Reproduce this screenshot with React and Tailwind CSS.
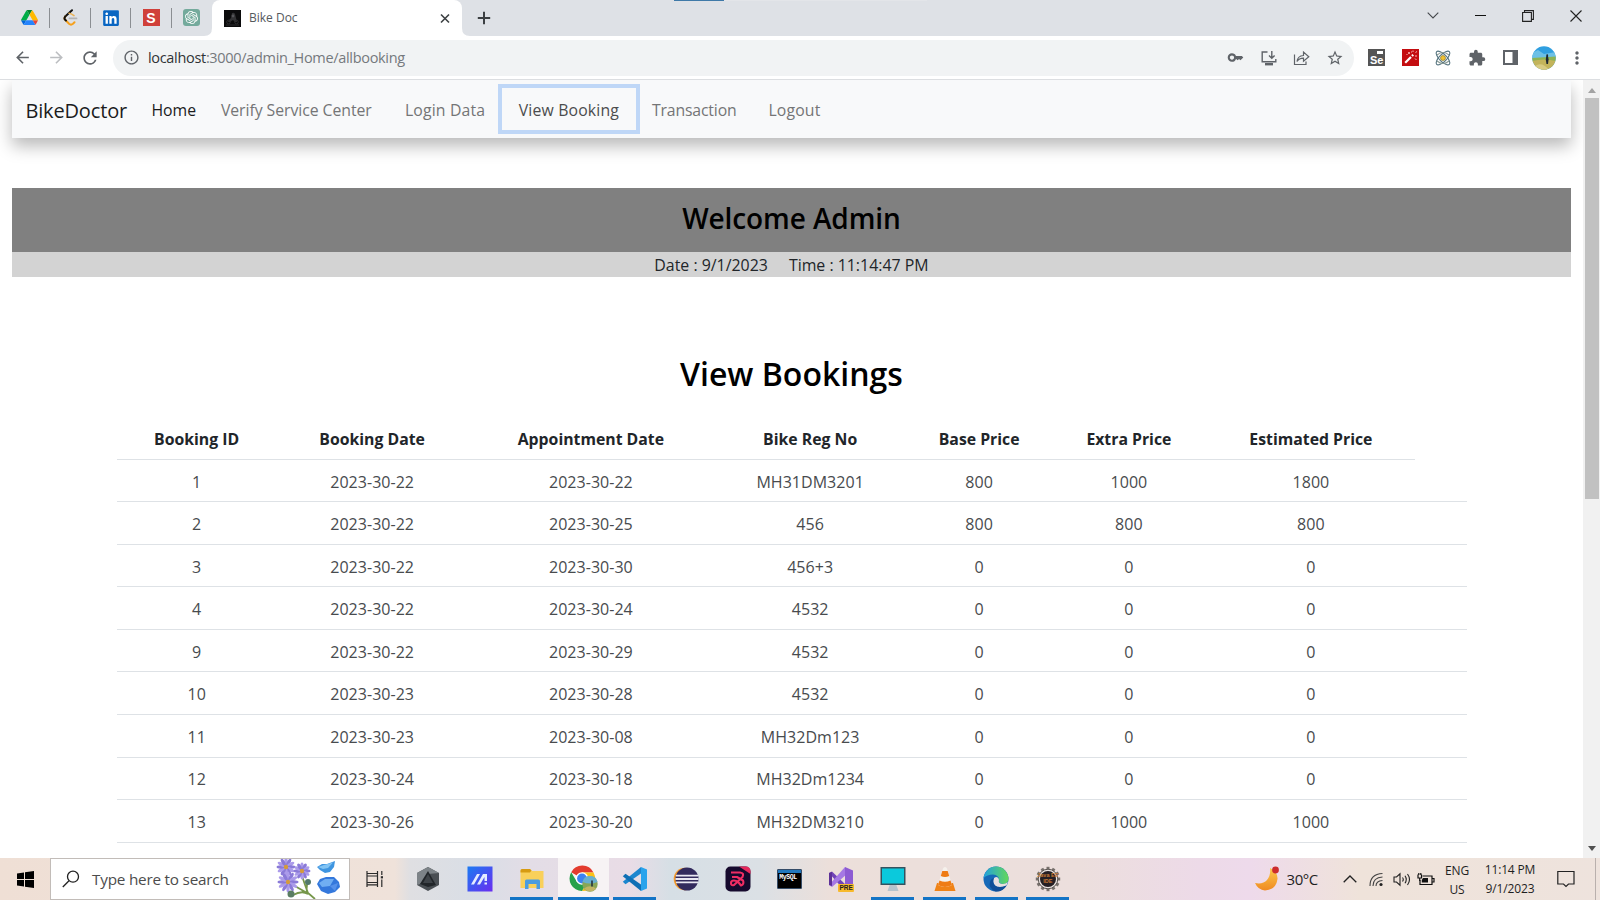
import React from "react";
import { MdKey, MdStarBorder, MdExtension, MdArrowBack, MdArrowForward, MdRefresh, MdInfoOutline, MdMoreVert } from "react-icons/md";
import { FaLinkedin } from "react-icons/fa";
import { SiOpenai } from "react-icons/si";

const Slot = ({ w, children, c = "" }) => (
  <div className={"flex shrink-0 items-center justify-center " + c} style={{ width: w }}>{children}</div>
);

function Drive() {
  return (
    <svg width="17" height="15" viewBox="0 0 87.3 78">
      <path d="m6.6 66.85 3.85 6.65c.8 1.4 1.95 2.5 3.3 3.3l13.75-23.8H0c0 1.55.4 3.1 1.2 4.5z" fill="#0066da" />
      <path d="m43.65 25-13.75-23.8c-1.35.8-2.5 1.9-3.3 3.3L1.2 48.5C.4 49.9 0 51.45 0 53h27.5z" fill="#00ac47" />
      <path d="m73.55 76.8c1.35-.8 2.5-1.9 3.3-3.3l9.25-16c.8-1.4 1.2-2.95 1.2-4.5H59.8l5.85 11.5z" fill="#ea4335" />
      <path d="m43.65 25 13.75-23.8C56.05.4 54.5 0 52.9 0H34.4c-1.6 0-3.15.45-4.5 1.2z" fill="#00832d" />
      <path d="M59.8 53H27.5L13.75 76.8c1.35.8 2.9 1.2 4.5 1.2h50.8c1.6 0 3.15-.45 4.5-1.2z" fill="#2684fc" />
      <path d="m73.4 26.5-12.7-22c-.8-1.4-1.95-2.5-3.3-3.3L43.65 25 59.8 53h27.45c0-1.55-.4-3.1-1.2-4.5z" fill="#ffba00" />
    </svg>
  );
}

function Leet() {
  return (
    <svg width="15" height="17" viewBox="0 0 15 17" fill="none" strokeLinecap="round">
      <path d="M9 1.2 2.2 7.6" stroke="#111" strokeWidth="2" />
      <path d="M2.2 7.6Q.8 9.2 2.2 10.8L6 14.8Q8 16.4 10 14.8L11.5 13.3" stroke="#f6a01b" strokeWidth="2" />
      <path d="M2.2 7.6Q.8 9.2 2.2 10.8L3 11.6" stroke="#111" strokeWidth="2" />
      <path d="M6 4.2Q8 4.2 11 6.6" stroke="#e9b155" strokeWidth="1.6" />
      <path d="M6.5 9.4H13.5" stroke="#b3b3b3" strokeWidth="1.8" />
    </svg>
  );
}

function BikeFav() {
  return (
    <svg width="17" height="17" viewBox="0 0 17 17">
      <rect width="17" height="17" fill="#0b0b0c" />
      <path d="M8 3Q10 2 11 4L12 8 13 12H11L9 10 6 12H4L5 10 7 8Z" fill="#323234" />
      <circle cx="9" cy="6" r="1.4" fill="#555558" />
      <circle cx="4.500" cy="12" r="1.800" fill="none" stroke="#2c2c2e" /><circle cx="12.500" cy="12" r="1.800" fill="none" stroke="#2c2c2e" />
      <path d="M2 15H15" stroke="#2c2c2e" />
    </svg>
  );
}

function TabStrip() {
  return (
    <div className="flex h-9 shrink-0 items-start bg-[#dee1e6]">
      <div className="flex h-[35px] w-[212px] items-center rounded-br-[8px] pl-[9px]">
        <Slot w={40}><Drive /></Slot>
        <div className="h-5 w-px bg-[#8b8e92]" />
        <Slot w={40}><Leet /></Slot>
        <div className="h-5 w-px bg-[#8b8e92]" />
        <Slot w={39}>
          <div className="flex h-[15px] w-[15px] items-center justify-center bg-white"><FaLinkedin size={18} color="#0a66c2" className="shrink-0" /></div>
        </Slot>
        <div className="h-5 w-px bg-[#8b8e92]" />
        <Slot w={40}>
          <div className="flex h-[17px] w-[17px] items-center justify-center bg-[#d0403a] font-['Liberation_Sans',sans-serif] text-[14px] leading-none font-bold text-white">S</div>
        </Slot>
        <div className="h-5 w-px bg-[#8b8e92]" />
        <Slot w={39}>
          <div className="flex h-[17px] w-[17px] items-center justify-center rounded-[3px] bg-[#74aa9c]"><SiOpenai size={13} color="#fff" /></div>
        </Slot>
      </div>
      <div className="relative flex h-9 w-[250px] items-center rounded-t-[8px] bg-white pl-3">
        <svg width="8" height="8" className="absolute bottom-0 -left-2"><path d="M8 0Q8 8 0 8H8Z" fill="#fff" /></svg>
        <svg width="8" height="8" className="absolute -right-2 bottom-0"><path d="M0 0Q0 8 8 8H0Z" fill="#fff" /></svg>
        <BikeFav />
        <span className="ml-2 w-[184px] text-[12px] leading-[34px] text-[#55595d]">Bike Doc</span>
        <svg width="17" height="17" viewBox="0 0 17 17" className="ml-[3.500px]" stroke="#3c4043" strokeWidth="1.6"><path d="M4 4.5 12 12.500M12 4.500 4 12.500" /></svg>
      </div>
      <div className="flex h-[35px] w-[44px] items-center justify-center">
        <svg width="14" height="14" viewBox="0 0 14 14" stroke="#3c4043" strokeWidth="2"><path d="M7 .8V13.200M.8 7H13.200" /></svg>
      </div>
      <div className="ml-[168px] h-px w-[50px] bg-[#3f79a8]" />
      <div className="h-px w-[203px] bg-[#e3e5e9]" />
      <div className="ml-auto flex h-[31px] items-center" >
        <Slot w={47}><svg width="12" height="7" viewBox="0 0 12 7" fill="none" stroke="#45484c" strokeWidth="1.1"><path d="M.7.7 6 6 11.300.7" /></svg></Slot>
        <Slot w={48}><div className="h-px w-[11px] bg-[#111]" /></Slot>
        <Slot w={47}><svg width="12" height="12" viewBox="0 0 12 12" fill="none" stroke="#222" strokeWidth="1.1"><path d="M.6 2.500H9.400V11.400H.6ZM2.500 2.500V.6H11.400V9.400H9.400" /></svg></Slot>
        <Slot w={49}><svg width="12" height="12" viewBox="0 0 12 12" stroke="#222" strokeWidth="1.1"><path d="M.5.5 11.500 11.500M11.500.5.5 11.500" /></svg></Slot>
      </div>
    </div>
  );
}

function Toolbar() {
  return (
    <div className="flex h-[44px] shrink-0 items-center border-b border-[#dcdee1] bg-white pl-[6px] text-[#5f6368]">
      <Slot w={33}><MdArrowBack size={19} /></Slot>
      <Slot w={34}><MdArrowForward size={19} color="#bcbec1" /></Slot>
      <Slot w={34}><MdRefresh size={20} /></Slot>
      <div className="ml-[6px] flex h-9 w-[1241px] items-center rounded-full bg-[#f1f3f4] pl-[10px]">
        <MdInfoOutline size={17} />
        <span className="ml-[8px] pt-px text-[14.500px] tracking-[-0.32px] text-[#75797d]"><span className="text-[#303336]">localhost</span>:3000/admin_Home/allbooking</span>
        <div className="mr-[2px] ml-auto flex">
          <Slot w={33.400}><MdKey size={17} /></Slot>
          <Slot w={33.400}>
            <svg width="16" height="16" viewBox="0 0 16 16" fill="none" stroke="#5f6368" strokeWidth="1.4"><path d="M6.500 2H1.200V11.800H14.800V9M10.800 1V8M8 5.500 10.800 8.200 13.600 5.500" /><path d="M4 14.200H12" strokeWidth="2.400" /></svg>
          </Slot>
          <Slot w={33.400}>
            <svg width="17" height="16" viewBox="0 0 17 16" fill="none" stroke="#5f6368" strokeWidth="1.200"><path d="M1.500 4.500V14.500H13V11.500M4 11.500Q4.500 6 10.500 5.500V2L15.800 6.800 10.500 11.200V8.200Q6 8.200 4 11.500Z" /></svg>
          </Slot>
          <Slot w={33.400}><MdStarBorder size={18} /></Slot>
        </div>
      </div>
      <div className="ml-[6px] flex">
        <Slot w={33.400}>
          <div className="relative flex h-[17px] w-[17px] items-end justify-center overflow-hidden bg-[#555] font-['Liberation_Sans',sans-serif] text-[11px] leading-[12px] font-bold text-white">Se<span className="absolute top-[2px] right-[2px] h-[3px] w-[6px] bg-white" /></div>
        </Slot>
        <Slot w={33.400}>
          <svg width="17" height="17" viewBox="0 0 17 17"><rect width="17" height="17" fill="#c40d10" /><path d="M3.200 13.800 9 8" stroke="#fff" strokeWidth="2.200" /><path d="M10 7 11.200 5.800" stroke="#fff" strokeWidth="2.200" /><path d="M7 3V5M6 4H8M11 1.500V3M13.500 3.500 15 2.500M13 7H15M13 9.500 14.500 11M4.500 5.500H5.500M9 3H10" stroke="#ffc9c9" strokeWidth=".9" /></svg>
        </Slot>
        <Slot w={33.400}>
          <svg width="18" height="18" viewBox="0 0 18 18" fill="none" stroke="#557480" strokeWidth="1.100"><ellipse cx="9" cy="9" rx="9" ry="3.600" transform="rotate(45 9 9)" /><ellipse cx="9" cy="9" rx="9" ry="3.600" transform="rotate(-45 9 9)" /><path d="M3 6Q9 1 15 6M3 12Q9 17 15 12" stroke="#8a9a94" /><circle cx="9" cy="9" r="2.500" fill="#f2c230" stroke="#8a7a30" strokeWidth=".7" /></svg>
        </Slot>
        <Slot w={33.400}><MdExtension size={18} /></Slot>
        <Slot w={33.400}><svg width="15" height="15" viewBox="0 0 15 15"><path fillRule="evenodd" d="M0 0H15V15H0ZM2 2V13H9.500V2Z" fill="#5f6368" /></svg></Slot>
        <Slot w={33.400}>
          <svg width="24" height="24" viewBox="0 0 24 24">
            <defs><clipPath id="av"><circle cx="12" cy="12" r="11.700" /></clipPath></defs>
            <g clipPath="url(#av)"><rect width="24" height="24" fill="#2f9fe0" /><path d="M0 7 6 4 12 8 24 6V12H0Z" fill="#6cc0e6" /><path d="M0 12 24 10.500V16H0Z" fill="#8db353" /><path d="M0 15Q12 12 24 15V24H0Z" fill="#c3b45b" /><path d="M3 20Q10 15 17 24H4Z" fill="#d8cb82" /><path d="M14.300 10H16L16.600 13.500 16 18H14.500L13.800 13.500Z" fill="#1d2733" /><circle cx="15.200" cy="9.300" r="1" fill="#1d2733" /></g>
          </svg>
        </Slot>
        <Slot w={33.400}><MdMoreVert size={20} /></Slot>
      </div>
    </div>
  );
}

function Navbar() {
  return (
    <nav className="flex h-[58px] shrink-0 items-center bg-[#f8f9fa] pl-[13px] text-[15.8px] text-[#747576] shadow-[0_8px_16px_rgba(0,0,0,0.28)]">
      <span className="w-[126px] pt-[3px] text-[20px] tracking-[-0.15px] text-[#1b1c1d]">BikeDoctor</span>
      <span className="w-[69.500px] pt-[4px] text-[#1b1c1d]">Home</span>
      <span className="w-[184px] pt-[4px] tracking-[-0.05px]">Verify Service Center</span>
      <span className="w-[93px] pt-[4px] tracking-[0.15px]">Login Data</span>
      <span className="flex h-[50px] w-[142px] items-center justify-center border-4 border-[#bfd7f7] bg-[#f8f9fa] pt-[4px] tracking-[0.15px] text-[#4b4c4d]">View Booking</span>
      <span className="ml-[12px] w-[116.500px] pt-[4px] tracking-[-0.15px]">Transaction</span>
      <span className="pt-[4px] tracking-[0.15px]">Logout</span>
    </nav>
  );
}

const head = ["Booking ID", "Booking Date", "Appointment Date", "Bike Reg No", "Base Price", "Extra Price", "Estimated Price"];
const rows = [
  ["1", "2023-30-22", "2023-30-22", "MH31DM3201", "800", "1000", "1800"],
  ["2", "2023-30-22", "2023-30-25", "456", "800", "800", "800"],
  ["3", "2023-30-22", "2023-30-30", "456+3", "0", "0", "0"],
  ["4", "2023-30-22", "2023-30-24", "4532", "0", "0", "0"],
  ["9", "2023-30-22", "2023-30-29", "4532", "0", "0", "0"],
  ["10", "2023-30-23", "2023-30-28", "4532", "0", "0", "0"],
  ["11", "2023-30-23", "2023-30-08", "MH32Dm123", "0", "0", "0"],
  ["12", "2023-30-24", "2023-30-18", "MH32Dm1234", "0", "0", "0"],
  ["13", "2023-30-26", "2023-30-20", "MH32DM3210", "0", "1000", "1000"],
];
const cols = "grid grid-cols-[159.500px_191.500px_246px_192.500px_145.500px_154px_210px] ";

function Bookings() {
  return (
    <div className="ml-[104.500px] w-[1350px] text-center text-[16px] text-[#484b4e]">
      <div className={cols + "h-[43.300px] w-[1298px] items-center border-b border-[#dee2e6] pt-[5px] text-[15.8px] font-bold text-[#212529]"}>
        {head.map((h) => <div key={h}>{h}</div>)}
      </div>
      {rows.map((r) => (
        <div key={r[0]} className={cols + "h-[42.540px] items-center border-b border-[#dee2e6] pt-[2px] tracking-[0.03px]"}>
          {r.map((v, i) => <div key={i}>{v}</div>)}
        </div>
      ))}
      <div className={cols + "h-[42.500px] items-center"}><div className="col-start-4">hh</div></div>
    </div>
  );
}

function Flowers() {
  const petals = [0, 30, 60, 90, 120, 150, 180, 210, 240, 270, 300, 330];
  const blooms = [[11, 8, 9], [27, 12, 8], [13, 23, 10]];
  return (
    <svg width="66" height="40" viewBox="0 0 66 40" className="shrink-0">
      <path d="M26 14Q30 26 33 34L40 40M18 26 34 35M18 36Q27 31 33 35M33 22Q31 28 32 33" fill="none" stroke="#76974a" strokeWidth="1.800" />
      {blooms.map(([x, y, r]) => (
        <g key={x}>
          {petals.map((a) => <ellipse key={a} cx={x} cy={y - r * 0.6} rx="1.700" ry={r * 0.45} fill={a % 60 ? "#8a7ad8" : "#ab9bea"} transform={`rotate(${a} ${x} ${y})`} />)}
          <circle cx={x} cy={y} r="2.200" fill="#d49a3c" />
        </g>
      ))}
      <circle cx="33" cy="23" r="3" fill="#52796c" /><circle cx="16" cy="35" r="3.500" fill="#5a7d63" />
      <path d="M42 8 47 5 52 5 60 2 59 8 55 13 50 14 45 11Z" fill="#3f95e0" /><path d="M43 8 49 6 58 3.500 53 9 48 10Z" fill="#82c4f4" />
      <path d="M42 25 45 20 51 18 59 18 64 23 65 28 60 33 53 35 46 32Z" fill="#3478dc" /><path d="M44 24 50 20 59 20 55 27 47 28Z" fill="#70aef2" /><path d="M55 27 63 24 60 32Z" fill="#5591ea" />
    </svg>
  );
}

const S = ({ children }) => <svg width="26" height="26" viewBox="0 0 26 26">{children}</svg>;
const teeth = [0, 30, 60, 90, 120, 150, 180, 210, 240, 270, 300, 330];

const apps = [
  { id: "armoury", el: <S><path d="M13 1 24 7V19L13 25 2 19V7Z" fill="#4a4f54" /><path d="M13 1 24 7 13 8 5 18 2 19V7Z" fill="#7d8388" /><path d="M13 5 21 19 13 21 5 18Z" fill="#22262a" /><path d="M13 8 18 17H8Z" fill="#3f4449" /></S> },
  { id: "myasus", el: <S><defs><linearGradient id="ma" x1="0" x2="1" y2="1"><stop stopColor="#1b7bf2" /><stop offset="1" stopColor="#6a2df0" /></linearGradient></defs><rect x=".5" y=".5" width="25" height="25" fill="url(#ma)" /><path d="M4 18.500 10 8H13L7 18.500ZM10 18.500 16 8H20V15H17.500V11L13 18.500ZM17.500 16.500H20V18.500H17.500Z" fill="#e5ecff" /></S> },
  { id: "files", run: true, el: <S><path d="M1.500 5Q1.500 3 3.500 3H11L13 5H24.500V22H1.500Z" fill="#f9d05a" /><path d="M1.500 6.500V4.500Q1.500 3 3 3H11L12.500 4.500 11 6.500Z" fill="#d79b12" /><path d="M6 23V15Q6 13.500 7.500 13.500H19.500Q21 13.500 21 15V23H17.500V18H9.500V23Z" fill="#4a9ce0" /></S> },
  { id: "chrome", run: true, active: true, el: (
    <svg width="30" height="28" viewBox="0 0 30 28"><path d="M14 13.500 3.200 7.200A12.600 12.600 0 0 1 25.500 7.500H14Z" fill="#e33b2e" /><path d="M14 7.500H25.500A12.600 12.600 0 0 1 14 26.100L19.500 17Z" fill="#fbc117" /><path d="M3.200 7.200A12.600 12.600 0 0 0 14 26.100L19.500 16.500 9 17Z" fill="#27a04b" /><circle cx="14" cy="13.500" r="6.200" fill="#fff" /><circle cx="14" cy="13.500" r="4.900" fill="#3c82f2" /><circle cx="22" cy="19" r="7.700" fill="#88a657" /><path d="M14.500 17A7.700 7.700 0 0 1 29.500 17Q22 20 14.500 17Z" fill="#68afcf" /><path d="M16 23.500Q22 19 28 23.500A7.700 7.700 0 0 1 16 23.500Z" fill="#c2b464" /><path d="M24 15.500V21.500" stroke="#26313a" strokeWidth="1.600" /></svg>) },
  { id: "code", run: true, el: <S><path d="M19 1 25 3.500V22.500L19 25Z" fill="#2aa3ec" /><path d="M19 1 .8 15.800 3.500 18.300 19 7.500Z" fill="#1c86cf" /><path d="M19 25 .8 10.200 3.500 7.700 19 18.500Z" fill="#0e6fb5" /></S> },
  { id: "eclipse", el: <S><circle cx="12" cy="13" r="11.300" fill="#f39a2d" /><circle cx="14" cy="13" r="11.500" fill="#322a5d" /><path d="M3 9.700H25M2.500 13H25.500M3 16.300H25" stroke="#e9e7f2" strokeWidth="1.800" /></S> },
  { id: "recorder", el: <S><rect x=".5" y=".5" width="25" height="25" rx="5" fill="#160a2e" /><path d="M14 .5H20.500Q25.500.5 25.500 5.500V8Z" fill="#e6285c" /><path d="M6 6.500H15Q19.500 7 17.500 11L9 19Q6 20 6 17 6 14.500 9 14.500 12 14.500 14 17L16 19.500Q19.500 18 18 14.500L12 11H7" fill="none" stroke="#f02d63" strokeWidth="2.100" strokeLinejoin="round" /></S> },
  { id: "mysql", el: (
    <div className="flex h-[20px] w-[25px] flex-col overflow-hidden rounded-[1px] border border-[#354c68] bg-black"><div className="h-[3px] bg-[#2077bd]" /><span className="pl-px font-['Liberation_Mono',monospace] text-[6.500px] leading-[9px] font-bold tracking-[-0.4px] text-white">MySQL</span></div>) },
  { id: "vs", el: (
    <div className="relative"><S><path d="M1 7 4 5.500 19 20 16 24Z" fill="#7243b8" /><path d="M1 19 4 21 19 8 17 1Z" fill="#a578e4" /><path d="M17 1 25 4.500V22L17 25Z" fill="#8d5bd3" /><path d="M1 7 4 6V20L1 19Z" fill="#5d3198" /></S><span className="absolute right-0 bottom-0 rounded-[1px] bg-[#f7b92c] px-[1.500px] font-['Liberation_Sans',sans-serif] text-[6.500px] leading-[8px] font-bold text-[#222]">PRE</span></div>) },
  { id: "monitor", run: true, el: <S><path d="M10 18H16L18.500 25H7.500Z" fill="#b6c3cd" /><rect x=".5" y="1" width="25" height="18" fill="#34525f" /><rect x="2" y="2.500" width="22" height="15" fill="#0bc9dc" /></S> },
  { id: "vlc", run: true, el: <S><path d="M5 17H21L23.500 25H2.500Z" fill="#f08316" /><path d="M13 1Q14.500 1 15 2.500L20 19Q13 23 6 19L11 2.500Q11.500 1 13 1Z" fill="#f5f1ec" /><path d="M10.300 5 15.700 5 17.200 10Q13 12 8.800 10ZM7.500 14.500Q13 17 18.500 14.500L20 19Q13 23 6 19Z" fill="#ef7c14" /></S> },
  { id: "edge", run: true, el: <S><defs><linearGradient id="eg" x1="0" x2="1"><stop stopColor="#22a0de" /><stop offset="1" stopColor="#63d85a" /></linearGradient></defs><circle cx="13" cy="13" r="12.500" fill="#1669b8" /><path d="M.6 12A12.500 12.500 0 0 1 25.500 12Q25.500 18 19.500 18 15 17.500 16 14 16 9 10 8.500 4 8.500.6 12Z" fill="url(#eg)" /><path d="M11 12Q9 16 12 19.500 16 22.500 23.500 19.500L25 16Q22 18.500 19 18 15 17.500 16 14Q15.500 11 13 11Z" fill="#e9dfe0" /><path d="M11 12Q9 16 12 19.500 16 22.500 23.500 19.500 20 26 12.500 25.500 5 22 7 16 8 12.500 11 12Z" fill="#114e98" /></S> },
  { id: "javaee", run: true, el: (
    <div className="relative flex"><S><g>{teeth.map((a) => <rect key={a} x="11.500" y=".8" width="3" height="4" fill="#77706c" transform={`rotate(${a} 13 13)`} />)}</g><circle cx="13" cy="13" r="9.800" fill="#e9e2df" stroke="#5b5552" /><circle cx="13" cy="13" r="8" fill="#251f24" /></S><span className="absolute inset-0 flex flex-col items-center justify-center font-['Liberation_Sans',sans-serif] text-[5.500px] leading-[5.500px] font-bold whitespace-nowrap text-[#c77a35]"><span>Java EE</span><span>IDE</span></span></div>) },
];

function Taskbar() {
  return (
    <div className="flex h-[42px] shrink-0 bg-[linear-gradient(90deg,#efdfd5_0px,#efe2da_395px,#dfdfe2_410px,#d9dee6_480px,#e3dde6_530px,#e9dce6_630px,#d6dfe5_670px,#dbe0e5_760px,#ecdfda_830px,#ecdfdd_1080px,#eddae8_1200px,#eedaeb_1250px,#efe3da_1360px,#eee3dd_1600px)] text-[#1f1f1f]">
      <div className="flex w-[50px] items-center justify-center">
        <svg width="17" height="17" viewBox="0 0 17 17"><path d="M0 2.500 7 1.500V8H0ZM8 1.300 17 0V8H8ZM0 9H7V15.500L0 14.500ZM8 9H17V17L8 15.700Z" /></svg>
      </div>
      <div className="flex w-[300px] items-center border border-[#c2bcb8] bg-white pl-[11px]">
        <svg width="18" height="18" viewBox="0 0 18 18" fill="none" stroke="#222" strokeWidth="1.300" className="shrink-0"><circle cx="11" cy="6.700" r="5.500" /><path d="M7 10.700 .8 17" /></svg>
        <span className="mt-px ml-[12px] w-[183px] shrink-0 text-[15.300px] tracking-[-0.22px] text-[#4c4c4c]">Type here to search</span>
        <Flowers />
      </div>
      <div className="flex w-[50px] items-center justify-center">
        <svg width="18" height="16" viewBox="0 0 18 16" fill="none" stroke="#2b2b2b" strokeWidth="1.200"><path d="M1 0V2.500H11.500V0M1 5H11.500V11.500H1ZM1 16V13.800H11.500V16M1 2.500V5M11.500 2.500V5M1 11V14M11.500 11V14" /><path d="M15.800 0V4M15.800 8.500V16" /><path d="M14.800 6.300H17" strokeWidth="2.200" /></svg>
      </div>
      <div className="flex pl-[2.500px]">
        {apps.map((a) => (
          <div key={a.id} className="flex w-[51.640px] flex-col items-center">
            <div className={"flex h-[39px] w-[51px] items-center justify-center pt-[2px] " + (a.active ? "bg-[#f7f3f4]" : "")}>{a.el}</div>
            <div className={"h-[3px] " + (a.active ? "w-[51px] " : "w-[43px] ") + (a.run ? "bg-[#1374c6]" : "")} />
          </div>
        ))}
      </div>
      <div className="ml-auto flex items-center">
        <svg width="26" height="26" viewBox="0 0 26 26"><defs><linearGradient id="mo" y2="1" x2="0"><stop stopColor="#fdc94a" /><stop offset="1" stopColor="#ef8a22" /></linearGradient></defs><path d="M16 2Q24 6 23.500 13 22 24 11 24.500 4 24 1 17 9 18.500 13 14 17 9 16 2Z" fill="url(#mo)" /><circle cx="21.500" cy="4" r="3.400" fill="#cc2c2c" /></svg>
        <span className="ml-[7px] w-[50px] text-[15px] tracking-[-0.45px]">30°C</span>
        <Slot w={27}><svg width="14" height="8" viewBox="0 0 14 8" fill="none" stroke="#222" strokeWidth="1.300"><path d="M.7 7.300 7 1 13.300 7.300" /></svg></Slot>
        <Slot w={26}><svg width="15" height="15" viewBox="0 0 15 15" fill="none" stroke="#444" strokeWidth="1.100"><path d="M1 14Q1 2 13.500 1.500M4 14Q4 5.500 13.500 5M7 14Q7 9 13.500 8.500" /><circle cx="12" cy="12.500" r="1.600" fill="#222" stroke="none" /></svg></Slot>
        <Slot w={24}><svg width="18" height="15" viewBox="0 0 18 15" fill="none" stroke="#222" strokeWidth="1.100"><path d="M1 5H3.500L7 1.800V13.200L3.500 10H1ZM9.500 5.500Q11 7.500 9.500 9.500M12 3.800Q14.500 7.500 12 11.200M14.500 2Q18.500 7.500 14.500 13" /></svg></Slot>
        <Slot w={25}><svg width="18" height="13" viewBox="0 0 18 13" fill="none" stroke="#111" strokeWidth="1.200"><path d="M5.500 3H15V11.500H3V7M15 5.500H17V9H15" /><path d="M6 5H11V9.500H4.800V7Z" fill="#111" stroke="none" /><path d="M1 1.500V5H4.500V1.500M2.700 5V8M1.800 0V2M3.800 0V2" /></svg></Slot>
        <div className="ml-[3.500px] w-[30px] pt-px text-center text-[12px] leading-[19px] tracking-[-0.1px]"><div>ENG</div><div>US</div></div>
        <div className="ml-[10px] w-[56px] text-center text-[12px] leading-[19px] tracking-[-0.15px] whitespace-nowrap"><div>11:14 PM</div><div>9/1/2023</div></div>
        <svg width="18" height="18" viewBox="0 0 18 18" fill="none" stroke="#222" strokeWidth="1.200" className="ml-[19px]"><path d="M.8 1.500H17V14H11.500L9 16.500 6.500 14H.8Z" /></svg>
        <div className="mr-1 ml-[20px] h-[42px] w-px bg-[#b9b0ad]" />
      </div>
    </div>
  );
}

export default function App() {
  return (
    <div className="flex h-[900px] w-[1600px] flex-col overflow-hidden bg-white font-['Open_Sans',sans-serif]">
      <TabStrip />
      <Toolbar />
      <div className="flex h-[778px] shrink-0 overflow-hidden">
        <main className="flex w-[1583px] flex-col overflow-hidden pr-[12.500px] pl-[12.400px]">
          <Navbar />
          <div className="mt-[50px] flex h-[64px] shrink-0 items-center justify-center bg-[#808080] pb-[5px] text-[28px] font-semibold tracking-[-0.1px] text-black">Welcome Admin</div>
          <div className="flex h-[25px] shrink-0 items-center justify-center gap-[21px] bg-[#d3d3d3] pt-[3px] text-[15.900px] text-[#212529]"><span>Date : 9/1/2023</span><span>Time : 11:14:47 PM</span></div>
          <h1 className="mt-[73px] flex h-[48px] shrink-0 items-center justify-center text-[32px] font-semibold text-black">View Bookings</h1>
          <div className="mt-[18.500px] shrink-0"><Bookings /></div>
        </main>
        <div className="flex w-[17px] flex-col items-center bg-[#f1f1f1] pt-[8px] pb-[7px]">
          <svg width="8" height="5"><path d="M0 5 4 0 8 5Z" fill="#a3a3a3" /></svg>
          <div className="mt-[5px] h-[401px] w-[14px] bg-[#c1c1c1]" />
          <svg width="8" height="5" className="mt-auto"><path d="M0 0 4 5 8 0Z" fill="#505050" /></svg>
        </div>
      </div>
      <Taskbar />
    </div>
  );
}
